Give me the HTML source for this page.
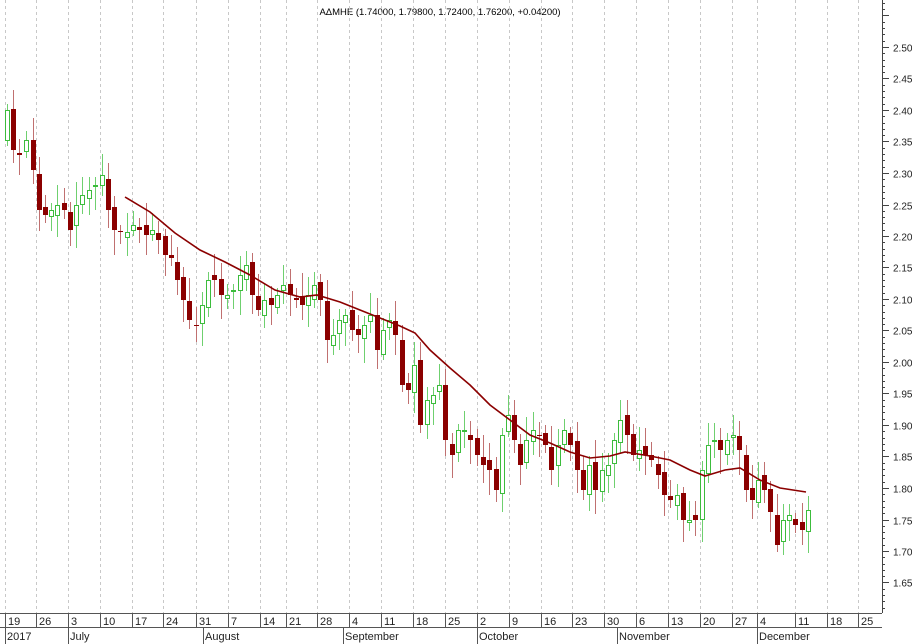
<!DOCTYPE html>
<html><head><meta charset="utf-8"><style>
html,body{margin:0;padding:0;background:#fff;width:914px;height:644px;overflow:hidden}
svg{display:block;font-family:"Liberation Sans",sans-serif}
</style></head><body>
<svg id="s" width="914" height="644" xmlns="http://www.w3.org/2000/svg">
<text x="440" y="15" font-size="9.5" text-anchor="middle" fill="#000">ΑΔΜΗΕ (1.74000, 1.79800, 1.72400, 1.76200, +0.04200)</text>
</svg>
<script>
var s=document.getElementById('s'),NS='http://www.w3.org/2000/svg';
function el(t,a,txt){var e=document.createElementNS(NS,t);for(var k in a)e.setAttribute(k,a[k]);if(txt)e.textContent=txt;s.appendChild(e);return e;}
var weeks=[[5,'19'],[36,'26'],[68,'3'],[100,'10'],[132,'17'],[163,'24'],[196,'31'],[228,'7'],[260,'14'],[286,'21'],[317,'28'],[349,'4'],[381,'11'],[413,'18'],[445,'25'],[477,'2'],[509,'9'],[541,'16'],[572,'23'],[604,'30'],[636,'6'],[668,'13'],[700,'20'],[732,'27'],[757,'4'],[795,'11'],[827,'18'],[858,'25']];
weeks.forEach(function(w){el('line',{x1:w[0]+.5,y1:0,x2:w[0]+.5,y2:613,stroke:'#c8c8c8','stroke-dasharray':'3,3'});
el('line',{x1:w[0]+.5,y1:613,x2:w[0]+.5,y2:628,stroke:'#555'});
el('text',{x:w[0]+3,y:625,'font-size':'11',fill:'#222'},w[1]);});
el('line',{x1:0,y1:613.5,x2:882,y2:613.5,stroke:'#555'});
el('line',{x1:0,y1:627.5,x2:882,y2:627.5,stroke:'#555'});
[[5,'2017'],[68,'July'],[203,'August'],[343,'September'],[477,'October'],[617,'November'],[757,'December']].forEach(function(m){
el('line',{x1:m[0]+.5,y1:628,x2:m[0]+.5,y2:644,stroke:'#555'});
el('text',{x:m[0]+2,y:640,'font-size':'11',fill:'#222'},m[1]);});
el('line',{x1:882.5,y1:0,x2:882.5,y2:613,stroke:'#444'});
function py(p){return 47+(2.50-p)/0.05*31.5;}
for(var i=0;i<=110;i++){var p=2.70-i*0.01;var y=Math.round(py(p))+.5;if(y<2||y>610)continue;var big=Math.round(p*100)%5==0;
el('line',{x1:882,y1:y,x2:big?889:885,y2:y,stroke:'#444'});
if(big&&p<2.52&&p>1.63)el('text',{x:893,y:y+4,'font-size':'10',fill:'#222'},p.toFixed(2));}
var c=[[5,110],[11,150],[17,155],[24,140],[31,170],[37,210],[43,215],[49,210],[55,205],[62,210],[68,230],[74,205],[80,195],[87,190],[93,185],[100,175],[106,210],[112,230],[118,232],[125,232],[131,225],[137,230],[144,235],[150,230],[156,240],[163,255],[169,258],[175,280],[181,300],[187,320],[194,325],[200,305],[206,280],[212,280],[219,295],[225,295],[231,290],[238,275],[244,265],[250,295],[256,310],[262,300],[269,305],[275,295],[281,285],[288,295],[294,300],[300,305],[306,295],[312,285],[318,300],[325,340],[331,335],[337,320],[343,315],[350,330],[356,335],[362,325],[368,315],[375,350],[381,330],[387,320],[393,335],[400,385],[406,390],[412,365],[418,425],[425,400],[431,395],[437,385],[443,440],[450,455],[456,430],[462,430],[468,440],[475,455],[481,465],[487,470],[494,490],[500,435],[506,415],[512,440],[518,465],[524,440],[531,430],[537,435],[543,445],[549,470],[556,445],[562,430],[568,445],[575,470],[581,490],[587,465],[593,490],[600,470],[606,465],[612,440],[618,420],[625,435],[631,455],[637,450],[643,455],[649,460],[656,475],[662,495],[668,500],[675,495],[681,520],[687,520],[693,520],[700,470],[706,445],[712,440],[718,450],[725,440],[731,435],[737,450],[744,490],[750,500],[756,480],[762,490],[768,512],[775,545],[781,520],[787,515],[793,525],[800,530],[806,510]];
var prev=125;
c.forEach(function(d,i){var x=d[0],cl=d[1],op=prev+((i*37)%11-5);if(i==0)op=140;
var top=Math.min(op,cl),bot=Math.max(op,cl);if(bot-top<1)bot=top+1;
var hi=top-6-(i*13)%18,lo=bot+6+(i*7)%20;
var up=cl<op;var col=up?'#3cbc3c':'#8b0000';
el('line',{x1:x+2.5,y1:hi,x2:x+2.5,y2:lo,stroke:up?'#6fd06f':'#c07070'});
if(up)el('rect',{x:x+.5,y:top+.5,width:4,height:bot-top,fill:'#fff',stroke:col});
else el('rect',{x:x,y:top,width:5,height:bot-top,fill:col});
prev=cl;});
var ma=[[125,197],[150,212],[175,233],[200,250],[225,262],[250,275],[275,290],[300,297],[317,295],[340,302],[360,310],[380,318],[400,326],[415,333],[430,350],[450,368],[470,385],[490,405],[510,420],[530,435],[550,443],[570,452],[590,458],[610,456],[625,452],[650,456],[670,460],[690,470],[705,476],[725,470],[740,468],[760,480],[780,488],[806,492]];
el('polyline',{points:ma.map(function(p){return p.join(',')}).join(' '),fill:'none',stroke:'#8b0000','stroke-width':'1.6'});
</script>
</body></html>
